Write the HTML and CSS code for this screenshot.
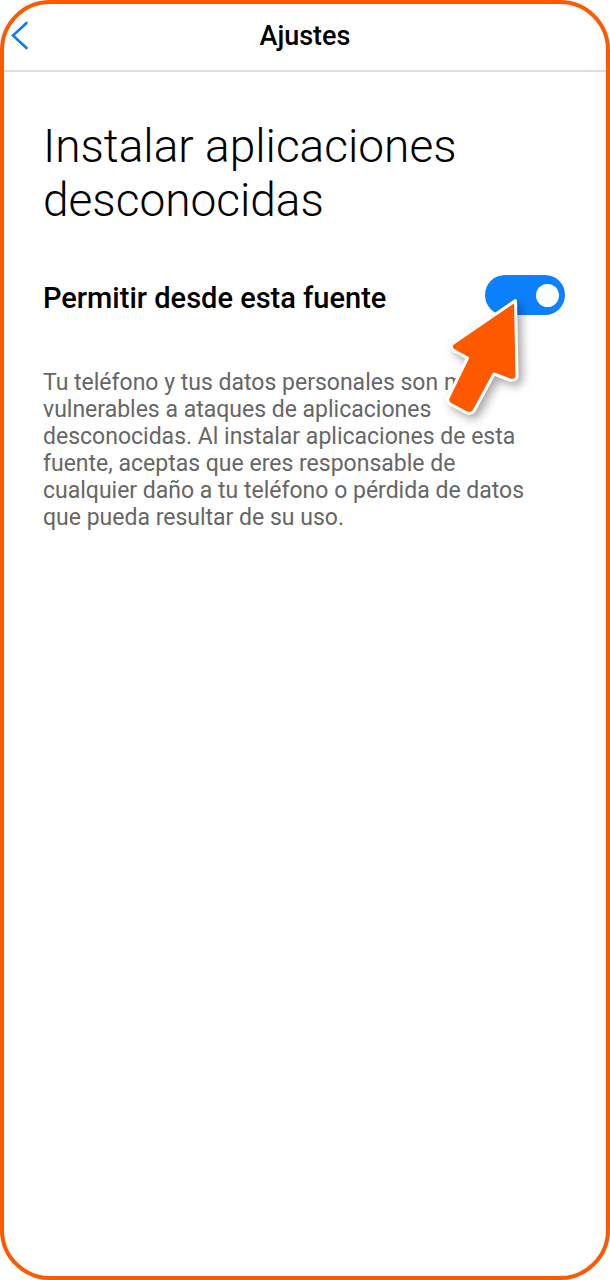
FILE: index.html
```html
<!DOCTYPE html>
<html lang="es">

<head>
    <meta charset="UTF-8">
    <meta name="viewport" content="width=device-width, initial-scale=1.0">
    <title>Ajustes</title>
    <link rel="stylesheet" href="styles.css">
</head>

<body>
    <div class="phone">
        <header class="top-bar">
            <button class="back" type="button" aria-label="Volver">
                <svg width="18" height="30" viewBox="0 0 18 30">
                    <path d="M15.5 2 L2 14.5 L15.5 27" fill="none" stroke="#0d7df5" stroke-width="2.6" stroke-linecap="round" />
                </svg>
            </button>
            <h2>Ajustes</h2>
        </header>

        <main>
            <h1>Instalar aplicaciones desconocidas</h1>

            <div class="option">
                <label for="allow">Permitir desde esta fuente</label>
                <div class="switch-box">
                    <input type="checkbox" id="allow" class="switch" checked>
                    <!-- arrow pointing at the switch -->
                    <svg class="pointer" width="100" height="150" viewBox="0 0 100 150">
                        <path d="M76.5 10.5 L13 54 Q11 57 14 60 L28.5 68 L9 108 Q8 112 11 114 L28 123 Q32 124.5 35 121 L55 84 L71 90 Q77 91 78 87 Z"
                            fill="#ff5900" stroke="#fff" stroke-width="3" stroke-linejoin="round" />
                    </svg>
                </div>
            </div>

            <p class="warning">Tu teléfono y tus datos personales son más vulnerables a ataques de aplicaciones desconocidas. Al instalar aplicaciones de esta fuente, aceptas que eres responsable de cualquier daño a tu teléfono o pérdida de datos que pueda resultar de su uso.</p>
        </main>
    </div>
</body>

</html>
```
FILE: styles.css
```css
body {
    margin: 0;
    background-color: white;
    font-family: Roboto, sans-serif;
    color: black;
}

.phone {
    box-sizing: border-box;
    min-height: 100vh;
    border: 4px solid #ff5900;
    border-radius: 50px;
    overflow: hidden;
}

.top-bar {
    display: grid;
    grid-template-columns: 40px 1fr 40px;
    align-items: center;
    height: 64px;
    padding-bottom: 2px;
    border-bottom: 2px solid #dedede;
}

.top-bar h2 {
    margin: 0;
    font-size: 27px;
    font-weight: 500;
    text-align: center;
}

.back {
    display: flex;
    padding: 0 0 0 7px;
    border: none;
    background: none;
}

main {
    padding: 47px 41px 47px 39px;
}

h1 {
    margin: 0;
    font-size: 46px;
    font-weight: 300;
    line-height: 54px;
}

.option {
    display: flex;
    justify-content: space-between;
    align-items: center;
    margin-top: 48px;
    font-size: 29px;
    font-weight: 500;
}

.option label {
    padding-top: 5px;
}

.switch-box {
    position: relative;
    display: flex;
}

.switch {
    appearance: none;
    display: flex;
    align-items: center;
    justify-content: flex-start;
    box-sizing: border-box;
    width: 80px;
    height: 40px;
    margin: 0;
    padding: 0 6px;
    border-radius: 20px;
    background-color: #bbb;
}

.switch:checked {
    justify-content: flex-end;
    background-color: #0d80fc;
}

.switch::before {
    content: "";
    width: 23px;
    height: 23px;
    border-radius: 50%;
    background-color: white;
}

.pointer {
    position: absolute;
    top: 15px;
    left: -46px;
    pointer-events: none;
    filter: drop-shadow(4px 4px 5px rgba(0, 0, 0, 0.35));
}

.warning {
    margin: 54px 40px 0 0;
    font-size: 23px;
    line-height: 27px;
    color: #666;
}
```
